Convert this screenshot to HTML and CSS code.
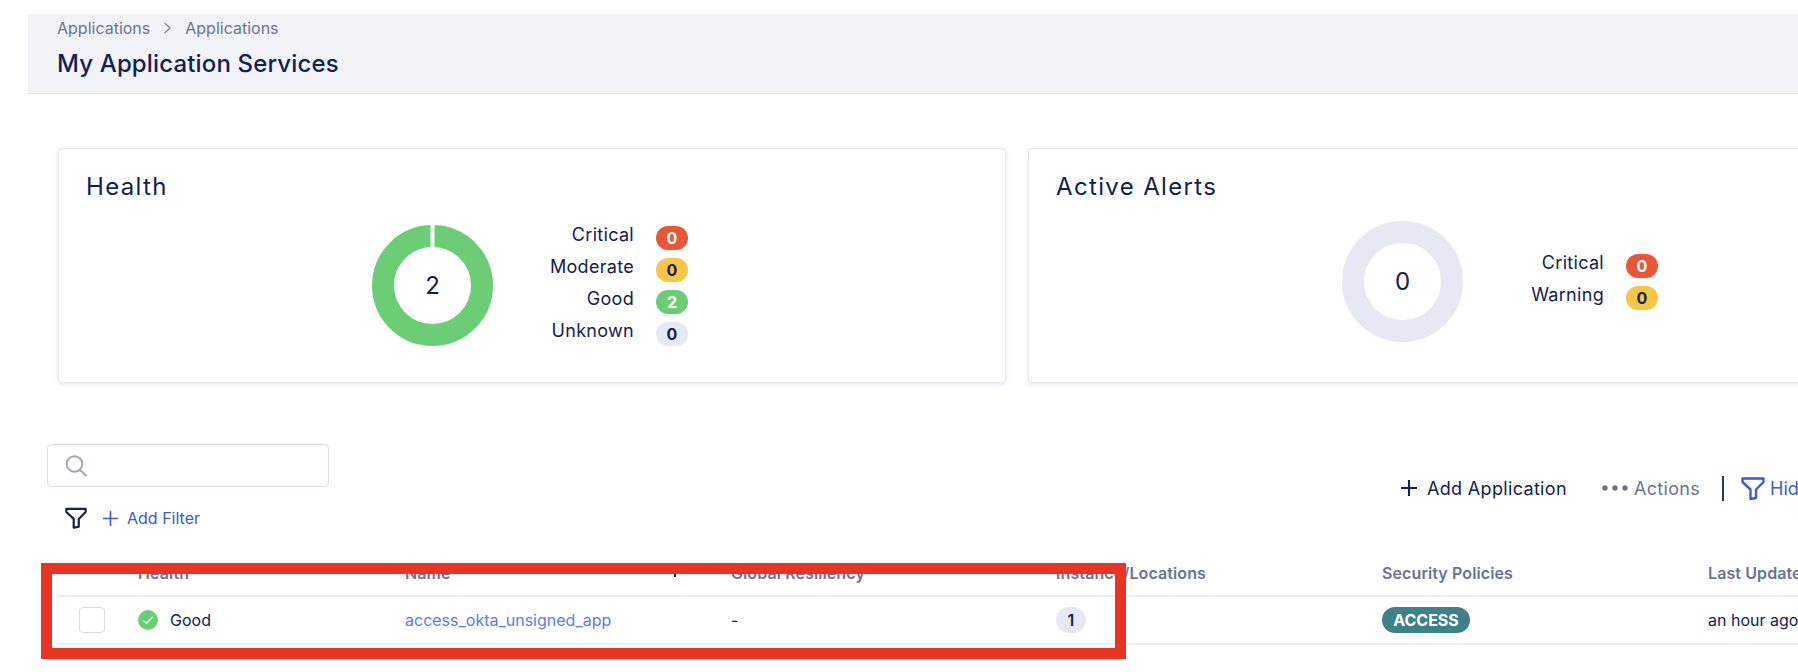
FILE: index.html
```html
<!DOCTYPE html>
<html lang="en">
<head>
    <meta charset="UTF-8">
    <meta name="viewport" content="width=device-width, initial-scale=1.0">
    <title>My Application Services</title>
    <link rel="stylesheet" href="styles.css">
</head>
<body>

    <header class="page-header">
        <nav class="breadcrumb">
            <span>Applications</span>
            <svg class="crumb-arrow" width="9" height="12" viewBox="0 0 9 12"><path d="M1.5 1l5.5 5-5.5 5" fill="none" stroke="#7d849f" stroke-width="1.3"/></svg>
            <span>Applications</span>
        </nav>
        <h1>My Application Services</h1>
    </header>

    <section class="cards">
        <div class="card">
            <h2>Health</h2>
            <div class="card-body">
                <div class="donut">
                    <svg width="121" height="121" viewBox="0 0 121 121">
                        <circle cx="60.5" cy="60.5" r="49.5" fill="none" stroke="#6bcd76" stroke-width="22"/>
                        <rect x="58.5" y="0" width="4" height="22" fill="#fff"/>
                    </svg>
                    <span class="donut-count">2</span>
                </div>
                <div class="legend">
                    <span class="legend-label">Critical</span><span class="pill pill-red">0</span>
                    <span class="legend-label">Moderate</span><span class="pill pill-yellow">0</span>
                    <span class="legend-label">Good</span><span class="pill pill-green">2</span>
                    <span class="legend-label">Unknown</span><span class="pill pill-grey">0</span>
                </div>
            </div>
        </div>
        <div class="card card-alerts">
            <h2>Active Alerts</h2>
            <div class="card-body">
                <div class="donut">
                    <svg width="121" height="121" viewBox="0 0 121 121">
                        <circle cx="60.5" cy="60.5" r="49.5" fill="none" stroke="#e6e9f3" stroke-width="22"/>
                    </svg>
                    <span class="donut-count">0</span>
                </div>
                <div class="legend">
                    <span class="legend-label">Critical</span><span class="pill pill-red">0</span>
                    <span class="legend-label">Warning</span><span class="pill pill-yellow">0</span>
                </div>
            </div>
        </div>
    </section>

    <section class="toolbar">
        <div class="toolbar-left">
            <div class="search">
                <svg width="23" height="22" viewBox="0 0 23 22"><circle cx="9.5" cy="9" r="7.8" fill="none" stroke="#a0a6bc" stroke-width="2"/><path d="M15 15l6.5 6" stroke="#a0a6bc" stroke-width="2" fill="none"/></svg>
            </div>
            <div class="filter-row">
                <svg width="22" height="22" viewBox="0 0 24 24"><path d="M1.5 2h21v3.5L15 13v8.5l-5.5 1V13L1.5 5.5z" fill="none" stroke="#14204f" stroke-width="2.4" stroke-linejoin="round"/></svg>
                <a class="add-filter">
                    <svg width="15" height="15" viewBox="0 0 15 15"><path d="M7.5 0v15M0 7.5h15" stroke="#3f5bc9" stroke-width="1.6"/></svg>
                    Add Filter
                </a>
            </div>
        </div>
        <div class="toolbar-right">
            <a class="add-app">
                <svg width="16" height="16" viewBox="0 0 16 16"><path d="M8 0v16M0 8h16" stroke="#14204f" stroke-width="2"/></svg>
                Add Application
            </a>
            <a class="actions">
                <svg width="26" height="6" viewBox="0 0 26 6"><circle cx="3" cy="3" r="2.7" fill="#6b7391"/><circle cx="13" cy="3" r="2.7" fill="#6b7391"/><circle cx="23" cy="3" r="2.7" fill="#6b7391"/></svg>
                Actions
            </a>
            <span class="divider"></span>
            <a class="hide-filters">
                <svg width="24" height="25" viewBox="0 0 24 24"><path d="M1.5 2h21v3.5L15 13v8.5l-5.5 1V13L1.5 5.5z" fill="none" stroke="#3f5bc9" stroke-width="2.4" stroke-linejoin="round"/></svg>
                Hide Filters
            </a>
        </div>
    </section>

    <div class="table">
        <div class="row row-head">
            <span></span>
            <span>Health</span>
            <span class="name-head">Name<i class="sort-mark"></i></span>
            <span>Global Resiliency</span>
            <span>Instance/Locations</span>
            <span>Security Policies</span>
            <span>Last Updated</span>
        </div>
        <div class="row">
            <span><span class="checkbox"></span></span>
            <span class="health">
                <svg width="20" height="20" viewBox="0 0 20 20"><circle cx="10" cy="10" r="10" fill="#6bcd76"/><path d="M5.5 10.5l3 3 6-6.5" fill="none" stroke="#fff" stroke-width="1.2"/></svg>
                Good
            </span>
            <span><a class="app-link">access_okta_unsigned_app</a></span>
            <span>-</span>
            <span><span class="count">1</span></span>
            <span><span class="policy">ACCESS</span></span>
            <span>an hour ago</span>
        </div>
    </div>

    <div class="highlight"></div>

</body>
</html>
```

FILE: styles.css
```css
body {
    font-family: Inter, "Liberation Sans", sans-serif;
    margin: 0;
    width: 1798px;
    height: 672px;
    overflow: hidden;
    background-color: #fff;
    color: #14204f;
}
a {
    text-decoration: none;
}

.page-header {
    margin: 14px 0 0 28px;
    height: 79px;
    padding-left: 29px;
    background-color: #f2f3f9;
    border-bottom: 1px solid #e4e6ef;
}
.breadcrumb {
    display: flex;
    align-items: center;
    gap: 13px;
    height: 27px;
    font-size: 16px;
    color: #6b7391;
}
.page-header h1 {
    margin: 9px 0 0;
    font-size: 24px;
    line-height: 28px;
    font-weight: 500;
    letter-spacing: 0.15px;
}

.cards {
    display: flex;
    gap: 22px;
    width: 2000px;
    margin: 54px 0 0 58px;
}
.card {
    flex: none;
    box-sizing: border-box;
    width: 948px;
    height: 235px;
    padding: 24px 27px 0;
    background-color: #fff;
    border: 1px solid #e4e6ef;
    border-radius: 4px;
    box-shadow: 0 2px 5px rgba(100, 110, 150, 0.15);
}
.card h2 {
    margin: 0;
    font-size: 24px;
    line-height: 28px;
    font-weight: 400;
    letter-spacing: 1.35px;
}
.card-body {
    display: flex;
    align-items: center;
    justify-content: center;
    gap: 51px;
    margin-top: 24px;
    padding-right: 4px;
}
.card-alerts .card-body {
    margin-top: 20px;
}

.donut {
    display: grid;
    place-items: center;
    width: 121px;
    height: 121px;
}
.donut svg, .donut-count {
    grid-area: 1 / 1;
}
.donut-count {
    font-size: 24px;
}

.legend {
    display: grid;
    grid-template-columns: 90px 32px;
    column-gap: 22px;
    row-gap: 8px;
}
.legend-label {
    height: 18px;
    text-align: right;
    font-size: 18px;
    line-height: 18px;
    letter-spacing: 0.3px;
}
.pill {
    height: 24px;
    border-radius: 12px;
    font-size: 16px;
    line-height: 24px;
    font-weight: 700;
    text-align: center;
}
.pill-red { background-color: #e95638; color: #fff; }
.pill-yellow { background-color: #f7c644; }
.pill-green { background-color: #6bcd76; color: #fff; }
.pill-grey { background-color: #e6e9f3; }

.toolbar {
    display: flex;
    margin: 61px 0 0 47px;
}
.toolbar-left {
    flex: none;
    width: 282px;
}
.search {
    box-sizing: border-box;
    display: flex;
    align-items: center;
    height: 43px;
    padding-left: 17px;
    border: 1px solid #d9dce8;
    border-radius: 4px;
}
.filter-row {
    display: flex;
    align-items: center;
    gap: 16px;
    margin: 20px 0 0 18px;
}
.add-filter {
    display: flex;
    align-items: center;
    gap: 9px;
    font-size: 16px;
    color: #3f5bc9;
}
.toolbar-right {
    flex: none;
    display: flex;
    align-items: center;
    height: 26px;
    margin: 31px 0 0 1072px;
    font-size: 18px;
    letter-spacing: 0.33px;
    white-space: nowrap;
}
.toolbar-right a {
    display: flex;
    align-items: center;
}
.add-app {
    gap: 10px;
    color: #14204f;
}
.actions {
    gap: 6px;
    margin-left: 35px;
    color: #6b7391;
}
.divider {
    width: 2px;
    height: 25px;
    margin: 0 17px 0 22px;
    background-color: #2a3768;
}
.hide-filters {
    gap: 5px;
    letter-spacing: 0;
    color: #3f5bc9;
}

.table {
    width: 1741px;
    margin: 28px 0 0 57px;
    font-size: 16px;
}
.row {
    display: grid;
    grid-template-columns: 81px 267px 326px 325px 326px 326px 300px;
    align-items: center;
    height: 46px;
    border-bottom: 2px solid #eceef5;
    white-space: nowrap;
}
.row-head {
    height: 31px;
    padding-bottom: 7px;
    font-weight: 600;
    letter-spacing: 0.1px;
    color: #6b7391;
}
.name-head {
    position: relative;
}
.sort-mark {
    position: absolute;
    left: 269px;
    top: 10px;
    width: 2px;
    height: 4px;
    background-color: #14204f;
}
.checkbox {
    display: block;
    box-sizing: border-box;
    width: 26px;
    height: 26px;
    margin-left: 22px;
    border: 1px solid #d9dce8;
    border-radius: 4px;
}
.health {
    display: flex;
    align-items: center;
    gap: 12px;
}
.app-link {
    color: #5b7bf0;
}
.count {
    display: block;
    width: 30px;
    height: 26px;
    border-radius: 13px;
    background-color: #e6e9f3;
    font-weight: 600;
    line-height: 26px;
    text-align: center;
}
.policy {
    display: block;
    width: 88px;
    height: 26px;
    border-radius: 13px;
    background-color: #3f818b;
    color: #fff;
    font-weight: 700;
    line-height: 26px;
    text-align: center;
}

/* red annotation box drawn over the screenshot */
.highlight {
    position: absolute;
    left: 41px;
    top: 563px;
    box-sizing: border-box;
    width: 1085px;
    height: 96px;
    border: 11px solid #eb3323;
}
```
